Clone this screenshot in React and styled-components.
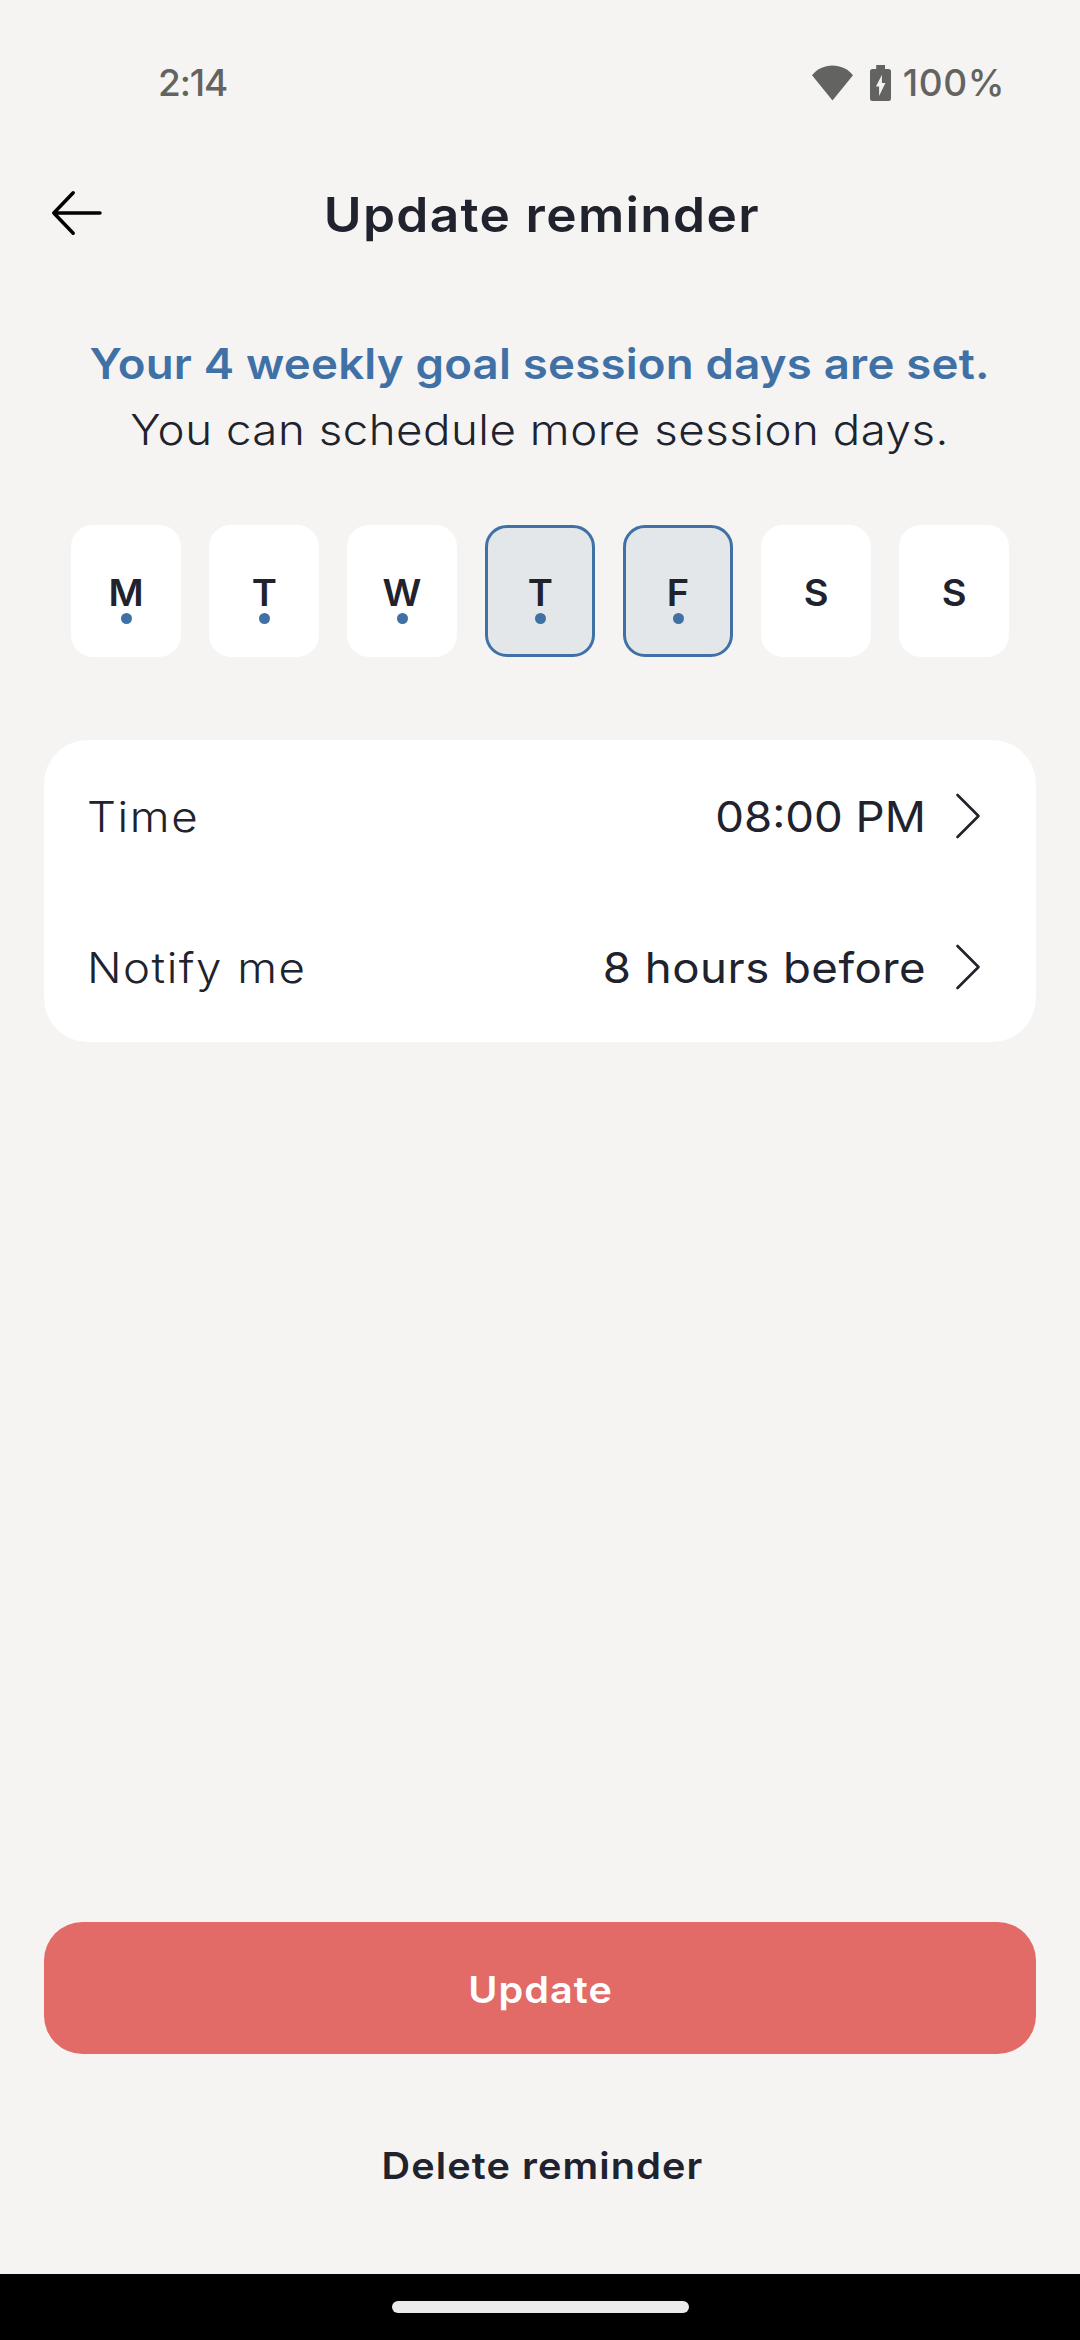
import React from "react";
import styled, { createGlobalStyle } from "styled-components";

const color = {
  page: "#f5f4f2",
  ink: "#20222d",
  blue: "#3f71a6",
  coral: "#e26a67",
  selected: "#e3e7ea",
  status: "#636361",
};

const GlobalStyle = createGlobalStyle`
  *, *::before, *::after { box-sizing: border-box; }
  body {
    margin: 0;
    background: ${color.page};
    color: ${color.ink};
    font-family: Inter, "Liberation Sans", sans-serif;
  }
  button { font-family: inherit; color: inherit; border: 0; background: none; padding: 0; }
`;

const Screen = styled.div`
  width: 1080px;
  height: 2340px;
  display: flex;
  flex-direction: column;
  overflow: hidden;
`;

const Text = styled.span`
  display: block;
  white-space: nowrap;
  font-size: ${(p) => p.$size}px;
  font-weight: ${(p) => p.$weight};
  letter-spacing: ${(p) => p.$track || 0}px;
  transform: scaleX(${(p) => p.$stretch || 1.07});
  transform-origin: ${(p) => p.$origin || "center"};
`;

const StatusBar = styled.header`
  height: 165px;
  padding: 0 75px 0 158px;
  display: flex;
  align-items: center;
  justify-content: space-between;
  color: ${color.status};
`;

const StatusIcons = styled.div`
  display: flex;
  align-items: center;
`;

const WifiIcon = styled.svg`
  width: 41px;
  height: 36px;
  margin-right: 17px;
`;

const BatteryIcon = styled.svg`
  width: 21px;
  height: 36px;
  margin-right: 12px;
`;

const TitleBar = styled.div`
  height: 99px;
  padding: 0 44px;
  display: grid;
  grid-template-columns: 66px 1fr 62px;
  align-items: center;
  justify-items: center;
`;

const BackButton = styled.button`
  width: 66px;
  height: 66px;
  margin-bottom: 3px;
  svg { display: block; }
`;

const Title = styled.h1`
  margin: 0;
`;

const Intro = styled.section`
  margin-top: 67px;
  display: flex;
  flex-direction: column;
  align-items: center;
  line-height: 66px;
`;

const Highlight = styled(Text)`
  color: ${color.blue};
`;

const Days = styled.div`
  margin-top: 62px;
  padding: 0 71px;
  display: flex;
  gap: 28px;
`;

const Day = styled.button`
  width: 110px;
  height: 132px;
  padding-top: 45px;
  display: flex;
  flex-direction: column;
  align-items: center;
  line-height: 39px;
  border: 3px solid ${(p) => (p.$selected ? color.blue : "#fff")};
  border-radius: 22px;
  background: ${(p) => (p.$selected ? color.selected : "#fff")};
`;

const Dot = styled.i`
  width: 11px;
  height: 11px;
  margin-top: 1px;
  border-radius: 50%;
  background: ${color.blue};
`;

const Card = styled.section`
  margin: 83px 44px 0;
  border-radius: 44px;
  background: #fff;
`;

const SettingRow = styled.div`
  height: 151px;
  padding: 0 44px 0 43px;
  display: flex;
  align-items: center;
  line-height: 54px;
`;

const SettingLabel = styled.div`
  flex: 1;
  display: flex;
  padding-top: 2px;
`;

const SettingValue = styled.div`
  padding-top: 2px;
  margin-right: 18px;
`;

const Chevron = styled.svg`
  width: 48px;
  height: 48px;
`;

const Actions = styled.footer`
  margin-top: auto;
  padding: 0 44px 43px;
  display: flex;
  flex-direction: column;
  gap: 45px;
`;

const ActionButton = styled.button`
  height: 132px;
  padding: ${(p) => (p.$primary ? "3px 0 0 2px" : "0 0 0 4px")};
  display: flex;
  align-items: center;
  justify-content: center;
  border-radius: 38.5px;
  background: ${(p) => (p.$primary ? color.coral : "transparent")};
  color: ${(p) => (p.$primary ? "#fff" : color.ink)};
`;

const NavigationBar = styled.nav`
  height: 66px;
  display: flex;
  align-items: center;
  justify-content: center;
  background: #000;
`;

const Handle = styled.div`
  width: 297px;
  height: 12px;
  border-radius: 6px;
  background: #ebebeb;
`;

const days = [
  { letter: "M", dot: true },
  { letter: "T", dot: true },
  { letter: "W", dot: true },
  { letter: "T", dot: true, selected: true },
  { letter: "F", dot: true, selected: true },
  { letter: "S" },
  { letter: "S" },
];

const settings = [
  { label: "Time", labelTrack: 1.5, value: "08:00 PM", valueTrack: 0 },
  { label: "Notify me", labelTrack: 1.4, value: "8 hours before", valueTrack: 0.45 },
];

export default function App() {
  return (
    <>
      <GlobalStyle />
      <Screen>
        <StatusBar>
          <Text $size={37} $weight={500} $track={-1.1} $stretch={1}>2:14</Text>
          <StatusIcons>
            <WifiIcon viewBox="0 0 41 36">
              <path d="M0 10.200C5.200 4 12.500 .6 20.500 .6S35.800 4 41 10.200L20.500 35.500Z" fill="currentColor" />
            </WifiIcon>
            <BatteryIcon viewBox="0 0 21 36">
              <path
                fillRule="evenodd"
                fill="currentColor"
                d="M6.200 0h8.800v4h3.500a2.500 2.500 0 0 1 2.500 2.500v27a2.500 2.500 0 0 1-2.500 2.500h-16A2.500 2.500 0 0 1 0 33.500v-27A2.500 2.500 0 0 1 2.500 4h3.700ZM11.900 9.800 6 21.600h3.100v9.300L15.400 18.100h-3.500Z"
              />
            </BatteryIcon>
            <Text $size={37} $weight={500} $track={0.6} $stretch={1}>100%</Text>
          </StatusIcons>
        </StatusBar>

        <TitleBar>
          <BackButton aria-label="Back">
            <svg width="66" height="66" viewBox="0 0 66 66" fill="none" stroke="#000" strokeWidth="3.500" strokeLinecap="round" strokeLinejoin="round">
              <path d="M56 33H9.800M29.200 12.800 9.800 33l19.400 20.200" />
            </svg>
          </BackButton>
          <Title>
            <Text $size={48} $weight={600} $track={1.27}>Update reminder</Text>
          </Title>
        </TitleBar>

        <Intro>
          <Highlight $size={42.6} $weight={600} $track={0.19}>
            Your 4 weekly goal session days are set.
          </Highlight>
          <Text $size={42.6} $weight={300} $track={0.5}>
            You can schedule more session days.
          </Text>
        </Intro>

        <Days>
          {days.map((day, i) => (
            <Day key={i} $selected={day.selected}>
              <Text $size={37} $weight={600} $stretch={1.03}>{day.letter}</Text>
              {day.dot && <Dot />}
            </Day>
          ))}
        </Days>

        <Card>
          {settings.map((s) => (
            <SettingRow key={s.label}>
              <SettingLabel>
                <Text $size={42.6} $weight={300} $track={s.labelTrack} $origin="left">{s.label}</Text>
              </SettingLabel>
              <SettingValue>
                <Text $size={42.6} $weight={400} $track={s.valueTrack} $origin="right">{s.value}</Text>
              </SettingValue>
              <Chevron viewBox="0 0 48 48" fill="none" stroke={color.ink} strokeWidth="2.600" strokeLinecap="round" strokeLinejoin="round">
                <path d="M13.500 3 34.500 24 13.500 45" />
              </Chevron>
            </SettingRow>
          ))}
        </Card>

        <Actions>
          <ActionButton $primary>
            <Text $size={37} $weight={600} $track={1}>Update</Text>
          </ActionButton>
          <ActionButton>
            <Text $size={37} $weight={600} $track={1.05}>Delete reminder</Text>
          </ActionButton>
        </Actions>

        <NavigationBar>
          <Handle />
        </NavigationBar>
      </Screen>
    </>
  );
}
